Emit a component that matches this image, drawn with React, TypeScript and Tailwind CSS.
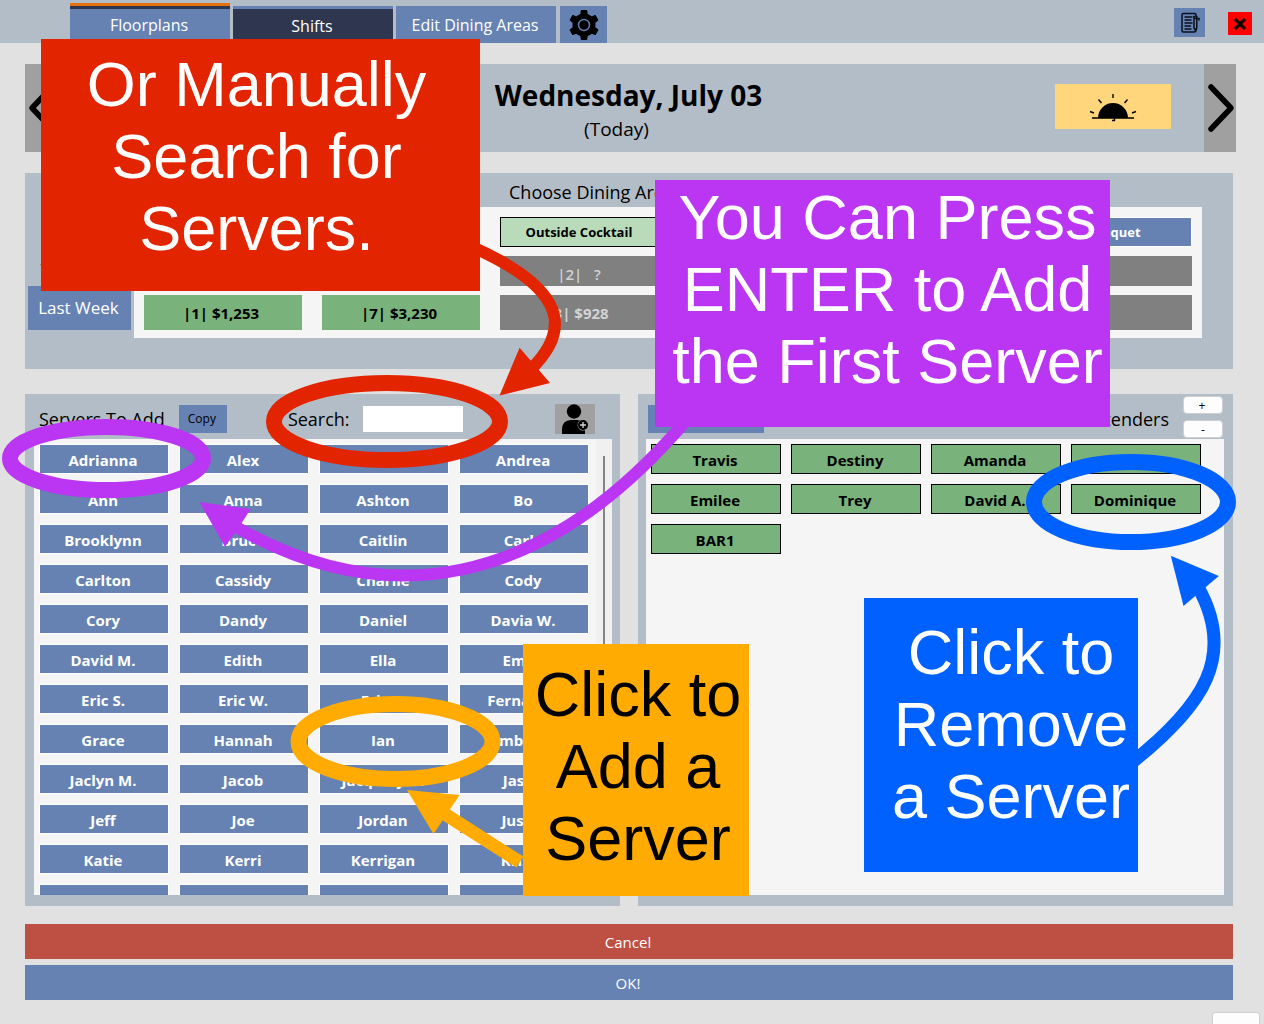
import React from "react";

const servers = [
  "Adrianna", "Alex", "", "Andrea",
  "Ann", "Anna", "Ashton", "Bo",
  "Brooklynn", "Bruce", "Caitlin", "Carly",
  "Carlton", "Cassidy", "Charlie", "Cody",
  "Cory", "Dandy", "Daniel", "Davia W.",
  "David M.", "Edith", "Ella", "Emily",
  "Eric S.", "Eric W.", "Eric Z.", "Fernando",
  "Grace", "Hannah", "Ian", "Imberly",
  "Jaclyn M.", "Jacob", "Jacquelynn", "Jason",
  "Jeff", "Joe", "Jordan", "Justin",
  "Katie", "Kerri", "Kerrigan", "Krista",
  "Kylie", "", "Leslie", "",
];

const bartenders = [
  "Travis", "Destiny", "Amanda", "Melinda",
  "Emilee", "Trey", "David A.", "Dominique",
  "BAR1",
];

const diningAreas = [
  { name: "", yesterday: "", lastWeek: "|1| $1,253", open: true },
  { name: "", yesterday: "", lastWeek: "|7| $3,230", open: true },
  { name: "Outside Cocktail", yesterday: "|2|   ?", lastWeek: "|3| $928", open: false, selected: true },
  { name: "", yesterday: "", lastWeek: "", open: false },
  { name: "", yesterday: "", lastWeek: "", open: false },
  { name: "Banquet", yesterday: "", lastWeek: "", open: false },
];

function Tab({ children, className }: { children: React.ReactNode; className: string }) {
  return (
    <button className={`w-40 pr-0.5 text-base text-white ${className}`}>{children}</button>
  );
}

function GearIcon() {
  return (
    <svg viewBox="0 0 32 32" className="size-8" aria-hidden="true">
      <g fill="#000">
        <circle cx="16" cy="16" r="11.5" />
        {[0, 60, 120, 180, 240, 300].map((a) => (
          <path key={a} d="M12 7 12.800 1.400Q12.900 1 13.500 1h5q.6 0 .7.4L20 7z" transform={`rotate(${a} 16 16)`} />
        ))}
      </g>
      <circle cx="16" cy="16" r="5.500" fill="none" stroke="#6582b3" strokeWidth="1.400" />
    </svg>
  );
}

function NotesIcon() {
  return (
    <svg viewBox="0 0 20 22" className="h-[22px] w-5" fill="none" stroke="#0a0f1c" strokeWidth="1.500" aria-hidden="true">
      <path d="M3 1.500h11.500q1.500 0 1.500 1.500v2M16 16v2q0 2-2 2H3.500q-1.500 0-1.500-1.500V3q0-1.500 1.500-1.500" />
      <path d="M4.500 5h8M4.500 8h7M4.500 11h8M4.500 14h6.500M4.500 17h7" />
      <path d="M14 4.500h2.800V16l-1.400 2.500L14 16zM14 6.500h5v2" />
    </svg>
  );
}

function SunriseIcon() {
  return (
    <svg viewBox="0 0 48 28" className="h-7 w-12" aria-hidden="true">
      <path d="M9 24a15 15 0 0 1 30 0z" fill="#000" />
      <path d="M3 24h42M24 0v4M9.500 5.500l3 3.500M38.500 5.500l-3 3.500M1 17.500l4 1.500M47 17.500l-4 1.500M23 26.500h2.500v-3" fill="none" stroke="#000" strokeWidth="1.400" />
    </svg>
  );
}

function AddPersonIcon() {
  return (
    <svg viewBox="0 0 40 30" className="h-[30px] w-10" aria-hidden="true">
      <circle cx="19" cy="7.500" r="7.200" />
      <path d="M7 30v-4Q7 16 16 16h6q7 0 8 7v7z" />
      <circle cx="28" cy="21" r="5.500" fill="#a0a0a0" />
      <circle cx="28" cy="21" r="5" />
      <path d="M28 18v6M25 21h6" stroke="#d8d8d8" strokeWidth="1.300" />
    </svg>
  );
}

function Chevron({ flip }: { flip?: boolean }) {
  return (
    <svg viewBox="0 0 32 50" className={flip ? "ml-1 h-[50px] w-8 shrink-0 rotate-180" : "h-[50px] w-8"} fill="none" stroke="#000" strokeWidth="5.500" strokeLinecap="round" strokeLinejoin="round" aria-hidden="true">
      <path d="M7 4l20 21L7 46" />
    </svg>
  );
}

function Callout({ lines, className }: { lines: string[]; className: string }) {
  return (
    <div className={`absolute text-center font-['Liberation_Sans',sans-serif] text-[63px] leading-[72px] whitespace-nowrap ${className}`}>
      {lines.map((line) => (
        <p key={line}>{line}</p>
      ))}
    </div>
  );
}

export default function App() {
  return (
    <div className="relative min-h-screen overflow-hidden bg-[#e1e1e1] font-['Open_Sans','Noto_Sans',sans-serif] text-black">
      <header className="flex h-[43px] items-end bg-[#b3bdc7] pr-3 pl-[70px]">
        <nav className="flex h-10 items-end gap-[3px]">
          <Tab className="h-10 border-t-[3px] border-[#e8710f] bg-[#6582b3] shadow-[inset_0_3px_0_#2f3750]">Floorplans</Tab>
          <Tab className="h-[37px] border-t-[3px] border-[#6582b3] bg-[#2f3750]">Shifts</Tab>
          <Tab className="h-[37px] bg-[#6582b3]">Edit Dining Areas</Tab>
          <button aria-label="Settings" className="ml-px flex h-[37px] w-[47px] items-center justify-center bg-[#6582b3]">
            <GearIcon />
          </button>
        </nav>
        <div className="ml-auto flex h-full items-center gap-[23px]">
          <button aria-label="Notes" className="mt-0.5 flex h-[29px] w-[31px] items-center justify-center bg-[#6582b3]">
            <NotesIcon />
          </button>
          <button aria-label="Close" className="mt-1 flex h-[23px] w-6 items-center justify-center bg-[#ff0000]">
            <svg viewBox="0 0 12 12" className="size-3" stroke="#100" strokeWidth="3.200" aria-hidden="true">
              <path d="M1 1l10 10M11 1L1 11" />
            </svg>
          </button>
        </div>
      </header>

      <main className="mr-[31px] ml-[25px]">
        <section className="mt-[21px] -mr-[3px] flex h-[88px] bg-[#b3bdc7]">
          <button aria-label="Previous day" className="flex w-8 items-center justify-center bg-[#a0a0a0]">
            <Chevron flip />
          </button>
          <div className="grid flex-1 grid-cols-[1fr_auto_1fr] items-center">
            <div />
            <div className="pt-1.5 pr-1 text-center">
              <h1 className="text-[28px] leading-9 font-bold">Wednesday, July 03</h1>
              <p className="pr-6 text-[19px] leading-8">(Today)</p>
            </div>
            <button aria-label="Day shift" className="mr-[33px] mb-1 flex h-[45px] w-[116px] items-center justify-center justify-self-end bg-[#ffd67b] pt-1">
              <SunriseIcon />
            </button>
          </div>
          <button aria-label="Next day" className="flex w-8 items-center justify-center bg-[#a0a0a0]">
            <Chevron />
          </button>
        </section>

        <section className="mt-[21px] bg-[#b3bdc7] pr-[31px] pb-[31px]">
          <h2 className="h-[34px] pt-[3px] pl-[484px] text-lg leading-8 font-medium">Choose Dining Areas</h2>
          <div className="flex">
            <div className="flex w-[109px] flex-col justify-end px-[3px] pb-2 text-center text-[17px]">
              <p className="pb-1">Yesterday</p>
              <button className="h-11 bg-[#6582b3] pr-0.5 text-white">Last Week</button>
            </div>
            <div className="grid flex-1 grid-cols-6 gap-x-5 bg-[#f5f5f5] px-2.5 pt-2.5 pb-2">
              {diningAreas.map((area, i) => (
                <div key={i} className="flex flex-col gap-[9px]">
                  <button
                    aria-label={area.name || "Dining area"}
                    className={`h-[30px] border pt-0.5 text-[13px] font-bold ${area.selected ? "border-black bg-[#badbba] text-black" : "border-white bg-[#6582b3] text-white"}`}
                  >
                    {area.name}
                  </button>
                  <div className={`flex h-[30px] items-center justify-center pt-1.5 text-[15px] font-semibold whitespace-pre ${area.open ? "bg-[#79b27a]" : "bg-[#808080] text-[#d3d3d3]"}`}>
                    {area.yesterday}
                  </div>
                  <div className={`flex h-[35px] items-center justify-center pt-0.5 pr-1 text-[15px] font-bold ${area.open ? "bg-[#79b27a]" : "bg-[#808080] text-[#d3d3d3]"}`}>
                    {area.lastWeek}
                  </div>
                </div>
              ))}
            </div>
          </div>
        </section>

        <div className="mt-[25px] grid grid-cols-2 gap-[18px]">
          <section className="bg-[#b3bdc7] pr-2 pb-[11px] pl-[9px]">
            <div className="flex h-[45px] items-center pt-1">
              <h2 className="ml-[5px] text-lg font-medium">Servers To Add</h2>
              <button className="ml-3.5 h-7 w-12 bg-[#6582b3] pr-0.5 text-xs">Copy</button>
              <label htmlFor="search" className="ml-[61px] text-lg font-medium">Search:</label>
              <input id="search" type="text" className="ml-[13px] h-[26px] w-[100px] bg-white px-1 text-sm outline-none" />
              <button aria-label="Add new server" className="mr-[17px] ml-auto bg-[#a0a0a0]">
                <AddPersonIcon />
              </button>
            </div>
            <div className="flex h-[456px] overflow-hidden bg-[#f5f5f5]">
              <div className="grid flex-1 auto-rows-[30px] grid-cols-[repeat(auto-fill,130px)] gap-2.5 p-[5px]">
                {servers.map((name, i) => (
                  <button key={i} aria-label={name || "Server"} className="border border-white bg-[#6582b3] pt-0.5 pr-0.5 text-[15px] font-bold text-white">
                    {name}
                  </button>
                ))}
              </div>
              <div className="flex w-4 justify-center bg-[#f0f0f0] pt-[17px]">
                <div className="h-[280px] w-0.5 bg-[#858585]" />
              </div>
            </div>
          </section>

          <section className="bg-[#b3bdc7] pr-[9px] pb-[11px] pl-2">
            <div className="flex h-[45px] items-center">
              <button aria-label="Clear servers" className="mt-1 ml-0.5 h-7 w-[116px] bg-[#6582b3]" />
              <p className="ml-auto pt-1 text-lg font-medium"># Bartenders</p>
              <div className="mr-px ml-3.5 flex flex-col gap-1.5 text-xs">
                <button className="h-[18px] w-10 rounded border border-[#d0d0d0] bg-[#fdfdfd] pr-0.5 leading-[18px]">+</button>
                <button className="h-[18px] w-10 rounded border border-[#d0d0d0] bg-[#fdfdfd] leading-[18px]">-</button>
              </div>
            </div>
            <div className="grid h-[456px] auto-rows-[30px] grid-cols-[repeat(auto-fill,130px)] content-start gap-2.5 bg-[#f5f5f5] p-[5px]">
              {bartenders.map((name) => (
                <button key={name} className="border border-black bg-[#79b27a] pt-0.5 pr-0.5 text-[15px] font-bold">
                  {name}
                </button>
              ))}
            </div>
          </section>
        </div>

        <div className="mt-[18px] flex flex-col gap-1.5 text-[15px] text-white">
          <button className="h-[35px] bg-[#be4f43] pt-0.5 pr-0.5">Cancel</button>
          <button className="h-[35px] bg-[#6582b3] pt-0.5 pr-0.5">OK!</button>
        </div>
      </main>

      <div className="mt-3 mr-1 ml-auto h-3 w-12 rounded-t border border-b-0 border-[#cfcfcf] bg-[#fdfdfd]" />

      <div className="pointer-events-none absolute inset-0">
        <Callout lines={["Or Manually", "Search for", "Servers."]} className="top-[39px] left-[41px] h-[252px] w-[439px] bg-[#e22400] pt-[9px] pr-2 text-white" />
        <svg viewBox="0 0 1264 1024" className="absolute top-0 left-0 h-[1024px] w-[1264px]" fill="none" aria-hidden="true">
          <g stroke="#e22400" fill="none">
            <ellipse cx="387" cy="421.500" rx="113" ry="38.500" strokeWidth="16" />
            <path d="M470 246C552 282 580 322 530 370" strokeWidth="12" />
            <path d="M499.500 395.500L519.600 347.700 532 362 550 383z" fill="#e22400" stroke="none" />
          </g>
          <g stroke="#bb36f3" fill="none">
            <ellipse cx="106.500" cy="458.500" rx="96.500" ry="31.500" strokeWidth="16" />
            <path d="M236 527C385 612 540 590 684 423" strokeWidth="12" />
            <path d="M199.300 502L250.700 509 241.700 523 235 533 225 546.700z" fill="#bb36f3" stroke="none" />
          </g>
          <g stroke="#ffab01" fill="none">
            <ellipse cx="395.500" cy="741.500" rx="97" ry="37.500" strokeWidth="16" />
            <path d="M440 811L520 862" strokeWidth="13" />
            <path d="M407 790L459.600 795 433.500 834z" fill="#ffab01" stroke="none" />
          </g>
          <g stroke="#0061fe" fill="none">
            <ellipse cx="1131" cy="502" rx="97" ry="40" strokeWidth="16" />
            <path d="M1198 587C1236 655 1205 705 1130 764" strokeWidth="13" />
            <path d="M1170.800 555.700L1218.800 576 1183.500 606z" fill="#0061fe" stroke="none" />
          </g>
        </svg>
        <Callout lines={["You Can Press", "ENTER to Add", "the First Server"]} className="top-[180px] left-[655px] h-[247px] w-[455px] bg-[#bb36f3] pt-px pl-2.5 text-white" />
        <Callout lines={["Click to", "Add a", "Server"]} className="top-[644px] left-[523px] h-[252px] w-[226px] bg-[#ffab01] pt-3.5 pl-1 text-black" />
        <Callout lines={["Click to", "Remove", "a Server"]} className="top-[598px] left-[864px] h-[274px] w-[274px] bg-[#0061fe] pt-[18px] pl-5 text-white" />
      </div>
    </div>
  );
}
